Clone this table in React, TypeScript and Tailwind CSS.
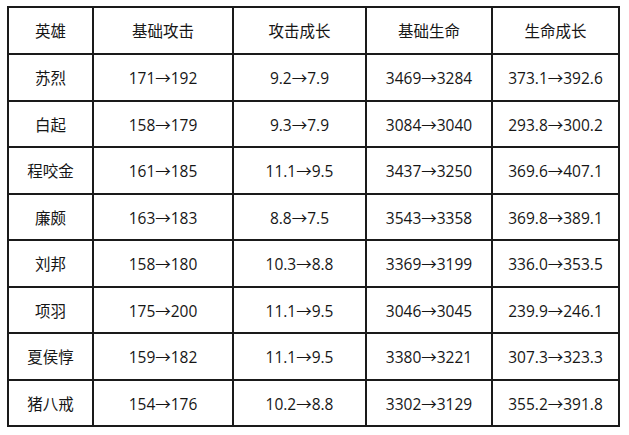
import React from "react";

const header = ["英雄", "基础攻击", "攻击成长", "基础生命", "生命成长"];
const rows = [
  ["苏烈", "171→192", "9.2→7.9", "3469→3284", "373.1→392.6"],
  ["白起", "158→179", "9.3→7.9", "3084→3040", "293.8→300.2"],
  ["程咬金", "161→185", "11.1→9.5", "3437→3250", "369.6→407.1"],
  ["廉颇", "163→183", "8.8→7.5", "3543→3358", "369.8→389.1"],
  ["刘邦", "158→180", "10.3→8.8", "3369→3199", "336.0→353.5"],
  ["项羽", "175→200", "11.1→9.5", "3046→3045", "239.9→246.1"],
  ["夏侯惇", "159→182", "11.1→9.5", "3380→3221", "307.3→323.3"],
  ["猪八戒", "154→176", "10.2→8.8", "3302→3129", "355.2→391.8"],
];

export default function App() {
  return (
    <div
      className="w-[629px] h-[435px] bg-white pl-[7px] pt-[6px] text-[#161616]"
      style={{ fontFamily: '"Open Sans", "Noto Sans CJK SC", sans-serif' }}
    >
      <table className="border-collapse w-[611px] table-fixed text-[15.5px]">
        <colgroup>
          <col className="w-[85px]" />
          <col className="w-[140px]" />
          <col className="w-[133px]" />
          <col className="w-[126px]" />
          <col className="w-[127px]" />
        </colgroup>
        <thead>
          <tr className="h-[47px]">
            {header.map((h) => (
              <th
                key={h}
                className="border-2 border-[#1a1a1a] font-normal text-center align-middle pt-[3px] p-0"
              >
                {h}
              </th>
            ))}
          </tr>
        </thead>
        <tbody>
          {rows.map((r) => (
            <tr key={r[0]} className="h-[46.5px]">
              {r.map((c, i) => (
                <td
                  key={i}
                  className="border-2 border-[#1a1a1a] text-center align-middle pt-[3px] p-0"
                >
                  {c}
                </td>
              ))}
            </tr>
          ))}
        </tbody>
      </table>
    </div>
  );
}
